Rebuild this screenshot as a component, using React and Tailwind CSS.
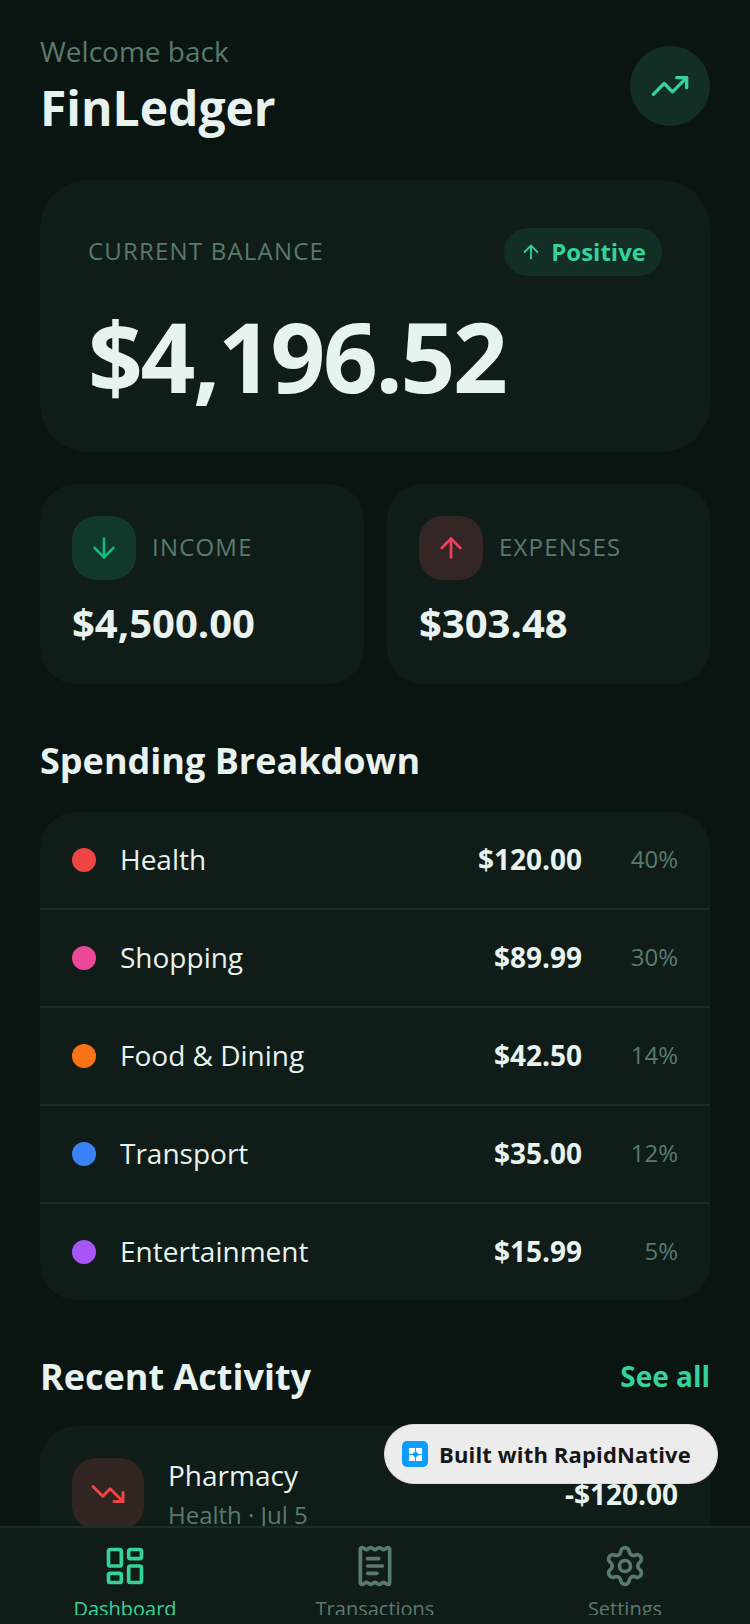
import React from 'react';
import { TrendingUp, TrendingDown, ArrowUp, ArrowDown, LayoutDashboard, ReceiptText, Settings } from 'lucide-react';

const categories = [
  { name: 'Health', amount: '$120.00', pct: '40%', dot: 'bg-[#ef4444]' },
  { name: 'Shopping', amount: '$89.99', pct: '30%', dot: 'bg-[#ec4899]' },
  { name: 'Food & Dining', amount: '$42.50', pct: '14%', dot: 'bg-[#f97316]' },
  { name: 'Transport', amount: '$35.00', pct: '12%', dot: 'bg-[#3b82f6]' },
  { name: 'Entertainment', amount: '$15.99', pct: '5%', dot: 'bg-[#a855f7]' },
];

const StatCard = ({ label, amount, iconBg, icon, width }) => (
  <div className={`h-[200px] rounded-[36px] bg-[#101c18] px-8 pt-8 ${width}`}>
    <div className="flex items-center gap-4">
      <div className={`w-[64px] h-[64px] rounded-[24px] flex items-center justify-center ${iconBg}`}>{icon}</div>
      <span className="-mt-[2px] text-[24px] leading-[32px] tracking-[1.2px] text-[#5a7a6e]">{label}</span>
    </div>
    <div className="mt-[15px] text-[40px] leading-[56px] font-bold text-[#e8f2ee]">{amount}</div>
  </div>
);

const NavItem = ({ icon, label, color }) => (
  <div className={`flex-1 flex flex-col items-center pt-[16px] ${color}`}>
    {icon}
    <span className="mt-[7px] shrink-0 text-[20px] leading-[28px] whitespace-nowrap">{label}</span>
  </div>
);

export default function App() {
  return (
    <div className="relative h-[1624px] w-[750px] overflow-hidden flex flex-col bg-[#0a1411] font-['Open_Sans','Noto_Sans',sans-serif]">
      <div className="flex-1 min-h-0 overflow-hidden px-10 pt-[31px]">
        {/* --- Header --- */}
        <div className="flex items-start justify-between">
          <div>
            <div className="text-[28px] leading-[40px] text-[#5a7a6e]">Welcome back</div>
            <div className="mt-[3px] text-[48px] leading-[68px] font-bold text-[#e8f2ee]">FinLedger</div>
          </div>
          <div className="mt-[15px] w-[80px] h-[80px] rounded-full bg-[#122e25] flex items-center justify-center">
            <TrendingUp size={40} strokeWidth={2} className="text-[#34d399]" />
          </div>
        </div>

        {/* --- Balance Card --- */}
        <div className="mt-[38px] h-[272px] rounded-[48px] bg-[#101c18] px-12 pt-12">
          <div className="flex items-center justify-between">
            <span className="-mt-[2px] text-[24px] leading-[32px] tracking-[1.2px] text-[#5a7a6e]">CURRENT BALANCE</span>
            <div className="h-[48px] pl-[16px] pr-4 rounded-full bg-[#122e25] flex items-center gap-[9px] text-[#34d399]">
              <ArrowUp size={22} strokeWidth={2} />
              <span className="text-[24px] leading-[32px] font-bold">Positive</span>
            </div>
          </div>
          <div className="mt-[20px] text-[96px] leading-[120px] font-bold tracking-[-2.4px] text-[#e8f2ee]">$4,196.52</div>
        </div>

        {/* --- Income / Expenses --- */}
        <div className="mt-[32px] flex gap-[23px]">
          <StatCard
            label="INCOME"
            amount="$4,500.00"
            iconBg="bg-[#12382c]"
            width="w-[324px]"
            icon={<ArrowDown size={32} strokeWidth={2} className="text-[#10b981]" />}
          />
          <StatCard
            label="EXPENSES"
            amount="$303.48"
            iconBg="bg-[#342624]"
            width="flex-1"
            icon={<ArrowUp size={32} strokeWidth={2} className="text-[#f43f5e]" />}
          />
        </div>

        {/* --- Spending Breakdown --- */}
        <div className="mt-[51px] text-[36px] leading-[52px] font-bold text-[#e8f2ee]">Spending Breakdown</div>
        <div className="mt-[25px] rounded-[36px] bg-[#101c18] overflow-hidden">
          {categories.map((c, i) => (
            <div
              key={c.name}
              className={`px-8 flex items-center ${i < categories.length - 1 ? 'h-[98px] border-b-2 border-[#1a2e28]' : 'h-[96px]'}`}
            >
              <div className={`w-6 h-6 rounded-full ${c.dot}`}></div>
              <span className="ml-6 flex-1 pb-[2px] text-[28px] leading-[40px] text-[#e8f2ee]">{c.name}</span>
              <span className="pb-[2px] text-[28px] leading-[40px] font-bold text-[#e8f2ee]">{c.amount}</span>
              <span className="w-[96px] pb-[2px] text-right text-[24px] leading-[32px] text-[#5a7a6e]">{c.pct}</span>
            </div>
          ))}
        </div>

        {/* --- Recent Activity --- */}
        <div className="mt-[51px] flex items-center justify-between">
          <span className="text-[36px] leading-[52px] font-bold text-[#e8f2ee]">Recent Activity</span>
          <span className="pb-[2px] text-[28px] leading-[40px] font-bold text-[#34d399]">See all</span>
        </div>
        <div className="mt-[23px] h-[200px] rounded-[36px] bg-[#101c18] px-8 pt-[32px] flex items-start">
          <div className="w-[72px] h-[72px] rounded-[24px] bg-[#302521] flex items-center justify-center">
            <TrendingDown size={36} strokeWidth={2} className="text-[#ef4444]" />
          </div>
          <div className="ml-6 flex-1 -mt-[3px]">
            <div className="text-[28px] leading-[40px] text-[#e8f2ee]">Pharmacy</div>
            <div className="mt-[3px] text-[24px] leading-[34px] text-[#5a7a6e]">Health · Jul 5</div>
          </div>
          <div className="mt-[16px] text-[28px] leading-[40px] font-bold text-[#e8f2ee]">-$120.00</div>
        </div>
      </div>

      {/* --- Bottom Tabs --- */}
      <div className="relative h-[98px] shrink-0 border-t-2 border-[#1a2e28] bg-[#101c18] flex">
        <div className="flex w-full h-[87px] overflow-hidden">
          <NavItem icon={<LayoutDashboard size={44} strokeWidth={2} className="shrink-0" />} label="Dashboard" color="text-[#34d399]" />
          <NavItem icon={<ReceiptText size={44} strokeWidth={2} className="shrink-0" />} label="Transactions" color="text-[#5a7a6e]" />
          <NavItem icon={<Settings size={44} strokeWidth={2} className="shrink-0" />} label="Settings" color="text-[#5a7a6e]" />
        </div>
      </div>

      {/* --- Floating Badge --- */}
      <div className="absolute left-[384px] top-[1424px] w-[334px] h-[60px] rounded-full bg-[#ececec] border border-[#dcdcdc] flex items-center pl-[17px]">
        <div className="w-[26px] h-[26px] rounded-[5px] bg-[#0a9dff] flex items-center justify-center">
          <svg width="15" height="15" viewBox="0 0 16 16" fill="white">
            <path d="M1 1h6.500v4L4.500 7.500H1zM8.500 1H15v6.500h-4L8.500 4.500zM1 8.500h4l2.500 3V15H1zM15 8.500V15H8.500v-4l3-2.500z" />
          </svg>
        </div>
        <span className="ml-[11px] text-[22px] leading-[32px] tracking-[0.15px] font-bold text-[#171717] whitespace-nowrap">Built with RapidNative</span>
      </div>
    </div>
  );
}
